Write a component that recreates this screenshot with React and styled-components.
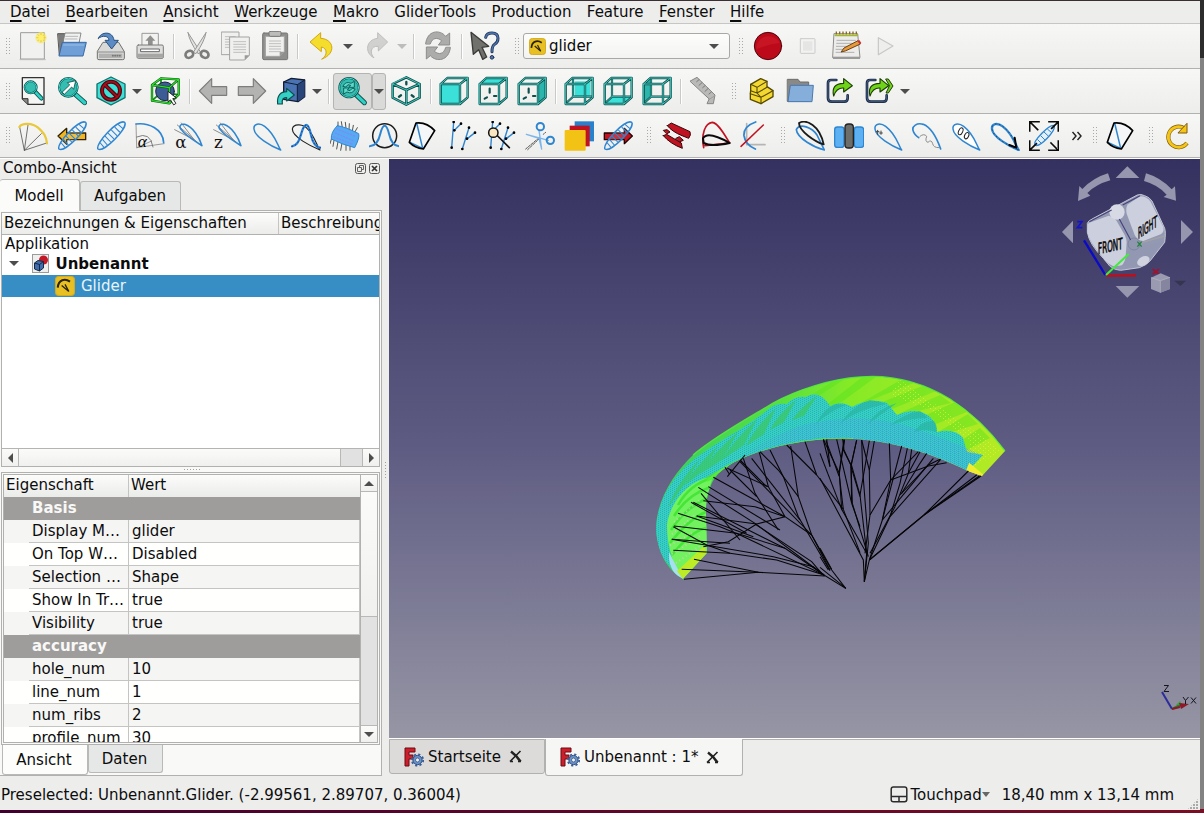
import React from "react";
import styled, { createGlobalStyle, css } from "styled-components";

const Global = createGlobalStyle`
  *{box-sizing:border-box}
  body{margin:0;background:#808080;font:15px/18px "DejaVu Sans",sans-serif;color:#0c0c0c;overflow:hidden}
  svg{display:block;flex:none}
`;

const Screen = styled.div`display:flex;width:1204px;height:813px;overflow:hidden;`;
const Desktop = styled.div`width:4px;background:linear-gradient(#2c2c2c 0 58px,#828282 58px 809px,#7b0d24 809px);`;
const Window = styled.div`
  width:1200px;height:813px;display:flex;flex-direction:column;background:#ededec;border-top:1px solid #3a2d33;
`;
const MenuBar = styled.nav`height:23px;flex:none;display:flex;gap:15.45px;padding:2px 10px 0;border-bottom:1px solid #c6c6c5;white-space:nowrap;`;
const Mnemonic = styled.span`text-decoration:underline;text-decoration-thickness:2px;text-underline-offset:3px;text-decoration-skip-ink:none;`;
const ToolBar = styled.div`
  height:${p => p.$h || 45}px;flex:none;display:flex;align-items:center;padding-left:4px;
  background:linear-gradient(#f7f7f6,#ededec);border-bottom:1px solid #b1b1b0;
`;
const Tool = styled.div`
  width:${p => p.$w || 39}px;flex:none;display:flex;justify-content:center;align-items:center;
  opacity:${p => p.$dim ? 0.45 : 1};
  ${p => p.$pressed && css`height:37px;background:#dadad9;border:1px solid #b4b4b3;border-radius:3px;`}
`;
const SepBox = styled.div`width:${p => p.$w || 8}px;flex:none;display:flex;justify-content:center;&::after{content:"";width:1px;height:25px;background:#c9c9c8;box-shadow:1px 0 #fff;}`;
const Gap = styled.div`width:${p => p.$w}px;flex:none;`;
const Handle = styled.div`
  width:${p => p.$w}px;flex:none;display:flex;justify-content:center;
  &::after{content:"";width:5px;height:17px;background:radial-gradient(circle at .5px .5px,#a9a9a8 .6px,transparent .8px) 0 0/3px 3px;}
`;
const Tri = styled.div`
  width:0;height:0;border:5px solid transparent;border-top-color:${p => p.$c || "#4d4d4d"};border-bottom:0;
  ${p => p.$small && css`border-left-width:4.5px;border-right-width:4.5px;`}
  ${p => p.$dir === "up" && css`border:5px solid transparent;border-bottom-color:#4d4d4d;border-top:0;`}
  ${p => p.$dir === "left" && css`border:5px solid transparent;border-right-color:#4d4d4d;border-left:0;`}
  ${p => p.$dir === "right" && css`border:5px solid transparent;border-left-color:#4d4d4d;border-right:0;`}
`;
const Combo = styled.div`
  width:207px;height:26px;display:flex;align-items:center;gap:3px;padding:0 10px 0 5px;border:1px solid #a8a8a7;border-radius:3px;
  background:linear-gradient(#fdfdfc,#f3f3f2);
`;
const Grow = styled.span`flex:1;`;

const Body = styled.div`height:618px;flex:none;display:flex;border-top:1px solid #fff;`;
const Dock = styled.aside`width:382px;display:flex;flex-direction:column;`;
const Splitter = styled.div`
  width:7px;display:flex;justify-content:center;padding-top:303px;
  &::after{content:"";width:1px;height:17px;background:repeating-linear-gradient(#a0a0a0 0 1px,transparent 1px 3px);}
`;
const DockTitle = styled.div`height:20px;flex:none;display:flex;align-items:flex-start;padding:0 2px 0 3px;gap:3px;`;
const DockButtons = styled.div`display:flex;gap:3px;padding-top:4px;`;
const TabRow = styled.div`height:31px;flex:none;display:flex;align-items:flex-end;`;
const Tab = styled.div`
  width:${p => p.$w}px;height:${p => p.$on ? 31 : 29}px;display:flex;align-items:center;justify-content:center;white-space:nowrap;
  border:1px solid #b9b9b8;border-bottom:0;border-radius:3px 3px 0 0;padding-right:1px;
  background:${p => p.$on ? "#fbfbfa" : "#e6e8e7"};
  ${p => p.$on && css`border-left:0;height:32px;margin-bottom:-1px;position:relative;`}
`;
const Pane = styled.div`
  flex:1;min-height:0;border:1px solid #b1b1b0;border-left:0;display:flex;flex-direction:column;padding:1px 1px 0;background:#f9f9f7;
`;
const Tree = styled.div`width:379px;height:255px;flex:none;background:#fff;border:1px solid #b1b1b0;display:flex;flex-direction:column;`;
const TreeHead = styled.div`height:22px;display:flex;background:linear-gradient(#fcfcfb,#ececeb);border-bottom:1px solid #b1b1b0;overflow:hidden;white-space:nowrap;`;
const HeadCell = styled.div`
  width:${p => p.$w}px;flex:none;padding:1px 0 0 2px;overflow:hidden;
  border-right:${p => p.$last ? 0 : "1px solid #c4c4c3"};
`;
const TreeRow = styled.div`
  height:${p => p.$h || 22}px;display:flex;align-items:center;gap:${p => p.$gap || 0}px;padding:0 0 1px ${p => p.$indent}px;
  font-weight:${p => p.$bold ? 700 : 400};
  background:${p => p.$sel ? "#368ec4" : "transparent"};color:${p => p.$sel ? "#e9f3fa" : "inherit"};
`;
const HScroll = styled.div`height:18px;margin-top:auto;display:flex;border-top:1px solid #b4b4b3;background:#e1e2e1;`;
const ScrollPart = styled.div`
  width:${p => p.$w}px;${p => p.$hh && css`height:${p.$hh}px;`}
  display:flex;align-items:center;justify-content:center;
  background:${p => p.$groove ? "#e0e1e0" : "linear-gradient(#fbfbfa,#f0f0ef)"};
  ${p => p.$v ? css`border-bottom:1px solid #b8b8b7;` : css`border-right:1px solid #b8b8b7;`}
  ${p => p.$end && css`border:0;border-top:${p.$v ? "1px solid #b8b8b7" : "0"};`}
`;
const DotLine = styled.div`width:17px;height:1px;flex:none;margin:2px 0 2px 183px;background:repeating-linear-gradient(90deg,#a0a0a0 0 1px,transparent 1px 3px);`;
const PropFrame = styled.div`width:379px;height:273px;flex:none;border:1px solid #b1b1b0;padding:1px;`;
const PropView = styled.div`height:100%;display:flex;border:1px solid #b1b1b0;background:#fff;`;
const PropTable = styled.div`width:357px;overflow:hidden;height:267px;`;
const PropHead = styled.div`height:22px;display:flex;background:linear-gradient(#fcfcfb,#eaecea);`;
const Group = styled.div`height:23px;background:#9f9d9b;color:#f8f8f7;font-weight:700;padding:2px 0 0 28px;`;
const PropRow = styled.div`
  height:23px;display:flex;padding-left:25px;background:${p => p.$alt ? "#f5f5f4" : "#fffffe"};
  white-space:nowrap;
`;
const Cell = styled.div`
  width:${p => p.$w}px;padding:2px 0 0 3px;border-right:1px solid #c4c4c3;border-bottom:1px solid #c4c4c3;overflow:hidden;
`;
const VScroll = styled.div`width:17px;display:flex;flex-direction:column;border-left:1px solid #b1b1b0;background:#e1e2e1;`;
const BottomTabs = styled.div`height:30px;flex:none;display:flex;align-items:flex-start;padding-left:1px;`;
const BottomTab = styled.div`
  width:${p => p.$w}px;height:${p => p.$on ? 30 : 28}px;display:flex;align-items:center;justify-content:center;
  border:1px solid #b9b9b8;border-top:0;border-radius:0 0 3px 3px;padding-right:2px;background:${p => p.$on ? "#fdfdfc" : "#e6e8e7"};
`;

const Main = styled.main`width:811px;display:flex;flex-direction:column;`;
const Viewport = styled.div`height:579px;background:linear-gradient(#343160,#5f5c83 50%,#9696a5);`;
const DocTabs = styled.div`height:38px;display:flex;align-items:flex-start;border-top:1px solid #fff;`;
const DocTab = styled.div`
  width:${p => p.$w}px;height:${p => p.$on ? 37 : 35}px;display:flex;align-items:center;padding-left:14px;white-space:nowrap;
  border:1px solid #b1b1b0;border-top:${p => p.$on ? "0" : "1px solid #b1b1b0"};border-radius:0 0 3px 3px;
  background:${p => p.$on ? "#f6f6f5" : "#dcdbda"};
`;
const DocRest = styled.div`flex:1;border-top:1px solid #b1b1b0;`;
const DocName = styled.span`margin:0 8px 0 4px;`;
const Status = styled.footer`height:33px;flex:none;display:flex;align-items:center;padding:4px 0 0 1px;white-space:nowrap;`;
const Touch = styled.div`display:flex;align-items:center;margin-right:12px;`;
const Grip = styled.div`width:12px;height:12px;margin:18px 1px 0 13px;align-self:flex-start;background:radial-gradient(circle at 1px 1px,#aaa .8px,transparent 1px) 0 0/3px 3px;clip-path:polygon(100% 0,100% 100%,0 100%);`;
const Taskbar = styled.div`height:3px;flex:none;margin-top:1px;background:linear-gradient(90deg,#42002e,#7b0d24);`;

/* ---------- icons ---------- */
const Ic = ({ s = 30, children }) => (
  <svg width={s} height={s} viewBox="0 0 90 90" fill="none" strokeLinecap="round" strokeLinejoin="round">{children}</svg>
);
const B = "#2f86d0";
const TEAL = "#3be0d8";
const DT = "#0d4f4b";
const WING = "M6 84C-4 68 68 -8 86 4C98 20 22 96 6 84Z";
const Ribs = () => <path d="M13 66L24 79M20 56L34 72M28 46L44 63M37 37L53 53M47 28L62 43M57 19L71 33M67 11L80 22" stroke={B} strokeWidth="3.2" />;
const Wing = ({ o = .55 }) => <><path d={WING} fill="#e4f0fa" fillOpacity={o} stroke={B} strokeWidth="4.5" /><Ribs /></>;
const Foil = ({ c = B, w = 4.5, f = "none" }) => <path d="M86 87C76 74 72 42 38 16C22 4 4 8 6 24C8 48 58 76 86 87Z" stroke={c} strokeWidth={w} fill={f} />;

const Page = ({ x, y, w, h, lines }) => (
  <><path d={`M${x} ${y}h${w}v${h - 14}l-14 14h${14 - w}z`} fill="#f0f0ef" stroke="#a3a3a2" strokeWidth="3" />
    <path d={`M${x + w} ${y + h - 14}h-14v14z`} fill="#999" />
    {lines && [14, 22, 30, 38, 46].map(d => <path key={d} d={`M${x + 11} ${y + d}h${w - 22}`} stroke="#b5b5b4" strokeWidth="2.5" />)}</>
);
const Cube = ({ face }) => {
  const k = { front: "M5 23H63V84H5Z", top: "M5 23L25 5H86L63 23Z", right: "M63 23L86 5V64L63 84Z", rear: "M32 16H80V60H32Z", bottom: "M8 82L26 62H84L63 82Z", left: "M6 23L26 8V62L6 82Z" }[face];
  const open = ["rear", "bottom", "left"].includes(face);
  const edges = "M5 24H63V84H5ZM5 24L25 6H86L63 24M86 6V64L63 84";
  return <Ic>
    <path d={k} fill={face === "left" || face === "right" ? "#2cb5ac" : TEAL} />
    {open
      ? <><path d="M27 8V62H84M27 62L6 82" stroke={DT} strokeWidth="6.5" /><path d="M27 8V62H84M27 62L6 82" stroke="#45cdc4" strokeWidth="2.5" /></>
      : face !== "front" && <path d="M35 38V50M20 68L27 64M48 60H55" stroke={DT} strokeWidth="6.5" />}
    <path d={edges} stroke={DT} strokeWidth="7" />
    <path d={edges} stroke="#48d2c9" strokeWidth="2.8" />
  </Ic>;
};
const Lens = ({ cx, cy, r, ex, ey, w = 11, children }) => (
  <><path d={`M${cx + r * .75} ${cy + r * .75}L${ex} ${ey}`} stroke={DT} strokeWidth={w + 4} />
    <path d={`M${cx + r * .75} ${cy + r * .75}L${ex} ${ey}`} stroke="#2fd0c6" strokeWidth={w - 1} />
    <circle cx={cx} cy={cy} r={r} fill="#34bdb0" stroke={DT} strokeWidth="6" />
    <circle cx={cx} cy={cy} r={r - .5} stroke="#3fd9cf" strokeWidth="3" />{children}</>
);
const Cursor = ({ x, y, k = 1, c = "#fff", s = "#222" }) => (
  <path transform={`translate(${x} ${y}) scale(${k})`} d="M0 0L0 32L8 26L18 42L25 37L15 22L25 20Z" fill={c} stroke={s} strokeWidth="3" />
);
const GreenArrow = ({ x = 0 }) => <path transform={`translate(${x} 0)`} d="M26 60C20 36 30 22 56 22V8L82 29L56 48V36C42 35 32 42 26 60Z" fill="#6fd319" stroke="#1c3e05" strokeWidth="3.5" />;
const Bracket = () => <><path d="M34 12H18Q9 12 9 21V66Q9 77 20 77H58Q68 77 68 66V58" stroke="#1c2b45" strokeWidth="8" /><path d="M34 12H18Q9 12 9 21V66Q9 77 20 77H58Q68 77 68 66V58" stroke="#5172a3" strokeWidth="2" /></>;
const Panel = () => <Ic><path d="M24 6Q56 0 80 29L46 84Q20 80 4 64Z" fill="#f4f6f8" /><path d="M26 6L44 82M6 64L44 82" stroke={B} strokeWidth="4.5" /><path d="M24 6Q56 2 80 29L46 84Q20 80 4 64Z" stroke="#000" strokeWidth="5" /></Ic>;
const Lines = () => <><path d="M14 80L20 3M22 28L42 8M46 84L66 20M58 55L84 35" stroke={B} strokeWidth="4.2" />
  {[[14, 80], [20, 3], [22, 28], [42, 8], [46, 84], [66, 20], [84, 35], [60, 53]].map(([x, y], i) => <circle key={i} cx={x} cy={y} r="4" fill="#000" />)}</>;

const I = {
  New: () => <Ic><rect x="9" y="5" width="70" height="79" fill="#f1f1f0" stroke="#9c9c9b" strokeWidth="3" /><path d="M6 86H82" stroke="#bbb" strokeWidth="3" /><circle cx="69" cy="20" r="17" fill="#f7e96b" opacity=".75" /><path d="M69 7v26M56 20h26M60 11l18 18M78 11l-18 18" stroke="#eccb20" strokeWidth="3" /><circle cx="69" cy="20" r="8" fill="#fff06a" /></Ic>,
  Open: () => <Ic><path d="M3 8H34V16H66V72H8Z" fill="#7c7c7b" stroke="#565656" strokeWidth="3" /><path d="M18 36L24 6H72L66 36Z" fill="#f1f1f1" stroke="#777" strokeWidth="2.5" /><path d="M26 16H62M25 24H60" stroke="#aaa" strokeWidth="2.5" /><path d="M17 34H88L78 75H7Z" fill="#6f9fd6" stroke="#3768a5" strokeWidth="3" /><path d="M20 42H80" stroke="#9cc0e8" strokeWidth="3" /></Ic>,
  Save: () => <Ic><path d="M22 34H68L85 62V82Q85 86 80 86H9Q4 86 4 82V62Z" fill="#d9d9d8" stroke="#6f6f6e" strokeWidth="3" /><path d="M5 63H85" stroke="#8a8a89" strokeWidth="3" /><rect x="9" y="68" width="70" height="13" fill="#b1b1b0" /><path d="M50 74h24" stroke="#777" strokeWidth="5" strokeDasharray="1 6" /><path d="M7 22C14 2 50 -2 54 28H67L47 54L27 28H39C38 14 20 12 7 22Z" fill="#5b8ac4" stroke="#2b527f" strokeWidth="3" /></Ic>,
  Print: () => <Ic><rect x="22" y="7" width="48" height="42" fill="#f2f2f1" stroke="#999" strokeWidth="3" /><path d="M46 13L61 29H53V42H39V29H31Z" fill="#8f8f8e" /><rect x="6" y="42" width="79" height="40" rx="4" fill="#dededd" stroke="#7b7b7a" strokeWidth="3" /><path d="M18 54H73V62H18Z" fill="#fff" stroke="#666" strokeWidth="3" /><path d="M6 68H85V80H6Z" fill="#a6a6a5" /></Ic>,
  Cut: () => <Ic><path d="M18 5L56 64L48 68Q22 30 18 5Z" fill="#e3e3e2" stroke="#989897" strokeWidth="3" /><path d="M72 5L34 64L42 68Q68 30 72 5Z" fill="#e3e3e2" stroke="#989897" strokeWidth="3" /><ellipse cx="22" cy="70" rx="12" ry="10" transform="rotate(-30 22 70)" stroke="#7c7c7b" strokeWidth="8" /><ellipse cx="68" cy="70" rx="12" ry="10" transform="rotate(30 68 70)" stroke="#7c7c7b" strokeWidth="8" /></Ic>,
  Copy: () => <Ic><Page x={2} y={3} w={52} h={68} lines /><Page x={27} y={18} w={58} h={69} lines /></Ic>,
  Paste: () => <Ic><rect x="8" y="6" width="75" height="80" rx="4" fill="#8f8f8e" stroke="#767675" strokeWidth="3" /><Page x={17} y={16} w={56} h={60} lines /><rect x="27" y="1" width="36" height="15" rx="4" fill="#bcbcbb" stroke="#777" strokeWidth="3" /></Ic>,
  Undo: () => <Ic><path d="M48 84C66 74 64 50 46 48V62L12 33L44 5V22C84 24 92 68 48 84Z" fill="#f4dd2c" stroke="#d0a712" strokeWidth="3" /></Ic>,
  Redo: () => <Ic><path d="M38 80C10 66 14 26 50 22V5L80 33L52 60V46C28 44 26 66 38 80Z" fill="#a9a9a8" stroke="#7d7d7c" strokeWidth="3" /></Ic>,
  Refresh: () => <Ic><path d="M8 38C12 -2 50 -6 68 16L80 6V42H46L56 29C42 18 28 20 22 38Z" fill="#acacab" stroke="#8d8d8c" strokeWidth="3" /><path d="M82 50C78 90 40 94 22 74L10 84V48H44L34 61C48 72 62 70 68 50Z" fill="#acacab" stroke="#8d8d8c" strokeWidth="3" /></Ic>,
  Whats: () => <Ic><path d="M3 4L56 46L36 49L50 78L38 85L26 56L10 70Z" fill="#70716d" stroke="#3a3b38" strokeWidth="4" /><path d="M47 19Q50 6 66 6Q84 6 84 22Q84 34 74 40Q66 45 66 62" stroke="#24395c" strokeWidth="9" /><path d="M47 19Q50 6 66 6Q84 6 84 22Q84 34 74 40Q66 45 66 62" stroke="#4e76ae" strokeWidth="4" /><circle cx="66" cy="79" r="5.5" fill="#4e76ae" stroke="#24395c" strokeWidth="3" /></Ic>,
  Record: () => <Ic><circle cx="45" cy="45" r="41" fill="#bd0a1b" stroke="#4c070d" strokeWidth="3" /><path d="M10 55A37 37 0 0 1 80 36Q40 40 10 55Z" fill="#cf1c2b" opacity=".6" /></Ic>,
  Stop: () => <Ic><rect x="22" y="23" width="44" height="44" rx="2" fill="#f2f2f1" stroke="#cbcbca" strokeWidth="3" /><rect x="30" y="31" width="28" height="28" fill="#e5e5e4" /></Ic>,
  Play: () => <Ic><path d="M22 20L66 45L22 71Z" fill="#eeeeed" stroke="#c7c7c6" strokeWidth="3.5" /></Ic>,
  Note: () => <Ic><path d="M7 8H77L84 80H3Z" fill="#ececeb" stroke="#8c8c8b" strokeWidth="3" /><path d="M3 77H84V84H3Z" fill="#9a9a99" /><path d="M11 6h64" stroke="#8a6a23" strokeWidth="9" strokeDasharray="4 6" strokeLinecap="butt" /><path d="M10 13h66" stroke="#a5b52b" strokeWidth="5" /><path d="M15 28H70M14 37H60M13 46H50M12 55H35M12 64H66" stroke="#b0b0af" strokeWidth="3" /><path d="M28 62L36 51L78 29L85 39L42 59Z" fill="#e79b3b" stroke="#6c4115" strokeWidth="3" /><path d="M76 30L82 27L88 36L84 40Z" fill="#c33" /></Ic>,
  FitAll: () => <Ic><path d="M13 5H78V85H30L13 68Z" fill="#f5f5f4" stroke="#333" strokeWidth="4" /><path d="M13 68H30V85" fill="#888" stroke="#333" strokeWidth="3" /><Lens cx={38} cy={34} r={18} ex={70} ey={67} w={9} /></Ic>,
  FitSel: () => <Ic><Lens cx={34} cy={34} r={28} ex={83} ey={80}><path d="M16 48L38 27L31 20L56 14L50 40L44 33L23 54Z" fill="#fff" stroke={DT} strokeWidth="2.5" /></Lens></Ic>,
  Style: () => <Ic><path d="M45 3L87 24V65L45 87L3 65V24Z" fill={TEAL} stroke="#14706b" strokeWidth="4" /><circle cx="45" cy="44" r="27" stroke="#56060e" strokeWidth="12" /><path d="M26 26L64 63" stroke="#56060e" strokeWidth="12" /><circle cx="45" cy="44" r="27" stroke="#a3101d" strokeWidth="5" /><path d="M26 26L64 63" stroke="#a3101d" strokeWidth="5" /></Ic>,
  BoxSel: () => <Ic><path d="M33 7V50L6 74M33 50L84 56" stroke="#0d8a12" strokeWidth="5" /><circle cx="45" cy="46" r="28" fill="#3b5c94" stroke="#15243f" strokeWidth="3" /><path d="M6 27L58 35V82L6 74ZM6 27L33 7L86 10L58 35M86 10V56L58 82" stroke="#0a5a0e" strokeWidth="7" /><path d="M6 27L58 35V82L6 74ZM6 27L33 7L86 10L58 35M86 10V56L58 82" stroke="#2fe02f" strokeWidth="3.5" /><Cursor x={54} y={47} k={.95} /></Ic>,
  Left: () => <Ic><path d="M4 45L41 8V32H86V58H41V82Z" fill="#b3b3b2" stroke="#7d7d7c" strokeWidth="3.5" /></Ic>,
  Right: () => <Ic><path d="M86 45L49 8V32H4V58H49V82Z" fill="#b3b3b2" stroke="#7d7d7c" strokeWidth="3.5" /></Ic>,
  Link: () => <Ic><path d="M23 18L46 7L86 12V62L66 77L23 70Z" fill="#4a73b4" stroke="#121d33" strokeWidth="4" /><path d="M64 26L86 12V62L64 77Z" fill="#28457a" /><path d="M23 18L64 26L86 12M64 26V77" stroke="#121d33" strokeWidth="3" /><path d="M5 84C2 58 14 47 32 47V37L55 57L32 75V65C22 64 17 70 19 84Z" fill="#35cfc6" stroke={DT} strokeWidth="3.5" /></Ic>,
  Zoom: () => <Ic><Lens cx={36} cy={35} r={29} ex={82} ey={80}><path d="M18 30Q26 14 42 22L52 16V34H36L41 28Q32 22 27 32ZM54 40Q46 56 30 48L20 54V36H36L31 42Q40 48 45 38Z" fill="#5cd9cd" stroke={DT} strokeWidth="2.5" /></Lens></Ic>,
  Iso: () => <Ic><path d="M46 4L86 24V65L46 86L5 65V24ZM5 24L46 42L86 24M46 42V86" stroke={DT} strokeWidth="7.5" /><path d="M46 4L86 24V65L46 86L5 65V24ZM5 24L46 42L86 24M46 42V86" stroke="#45cdc4" strokeWidth="2.8" /><path d="M46 18V25M24 62L30 58M62 58L68 62" stroke={DT} strokeWidth="7" /></Ic>,
  Ruler: () => <Ic><path d="M7 15L27 4L81 57L76 83L57 83L63 70Z" fill="#b9b9b8" stroke="#868685" strokeWidth="3" /><path d="M33 11l-7 6M42 20l-9 8M51 29l-7 6M60 38l-9 8M70 48l-7 6" stroke="#7b7b7a" strokeWidth="3" /><path d="M63 70L80 60" stroke="#959594" strokeWidth="2.5" /></Ic>,
  Bricks: () => <Ic><path d="M11 44L11 25L41 8L60 16V32L78 44V62L42 83L10 70V53Z" fill="#f3d832" stroke="#574900" strokeWidth="4" /><path d="M11 25L30 34L60 16M30 34V51M11 44L30 51L60 34M30 51L42 64V83M10 53L42 64L78 44" stroke="#574900" strokeWidth="3.2" /></Ic>,
  Folder: () => <Ic><path d="M5 10H36L42 18H68V76H5Z" fill="#898988" stroke="#6c6c6b" strokeWidth="3" /><path d="M14 28H82L78 77H7Z" fill="#85aedb" stroke="#4a78b0" strokeWidth="3" /></Ic>,
  Share: () => <Ic><Bracket /><GreenArrow /></Ic>,
  Share2: () => <Ic><Bracket /><GreenArrow x={-8} /><path d="M66 9H73L87 30L73 51H66L76 30Z" fill="#6fd319" stroke="#1c3e05" strokeWidth="3" /></Ic>,
  Fan: () => <Ic><path d="M5 18L19 88L30 12M19 88L70 38M19 88L86 66" stroke="#555" strokeWidth="2.5" /><path d="M4 18C12 4 44 6 60 20C78 36 84 44 87 67" stroke="#e9c83c" strokeWidth="6.5" /></Ic>,
  WingLeft: () => <Ic><path d="M3 45L29 22V36H86V56H29V70Z" fill="#f2b520" stroke="#2e2200" strokeWidth="4" /><Wing o={.15} /></Ic>,
  Wing: () => <Ic><Wing /></Ic>,
  Arc: () => <Ic><path d="M3 9L5 80L87 68M5 80L50 60" stroke="#888" strokeWidth="2.5" /><path d="M5 48Q46 30 54 78" stroke="#666" strokeWidth="2.5" /><path d="M3 9C40 4 84 24 86 65" stroke={B} strokeWidth="5" /><text x="8" y="77" fontSize="52" fontStyle="italic" fontFamily="Liberation Serif, serif" fill="#000">α</text></Ic>,
  Alpha: () => <Ic><path d="M10 12L82 74M2 26L60 56L22 6" stroke="#777" strokeWidth="2.5" /><path d="M84 74C76 50 58 18 32 10C18 7 14 17 22 26C34 44 62 60 84 74Z" stroke={B} strokeWidth="4.5" /><text x="4" y="81" fontSize="50" fontFamily="DejaVu Serif, serif" fill="#111">α</text></Ic>,
  Zed: () => <Ic><path d="M10 12L82 74M2 26L60 56L22 6" stroke="#777" strokeWidth="2.5" /><path d="M84 74C76 50 58 18 32 10C18 7 14 17 22 26C34 44 62 60 84 74Z" stroke={B} strokeWidth="4.5" /><text x="3" y="81" fontSize="50" fontFamily="DejaVu Serif, serif" fill="#111">z</text></Ic>,
  Foil: () => <Ic><Foil /></Ic>,
  Ballon: () => <Ic><path d="M87 87C60 76 4 48 4 24C8 4 40 12 48 22C70 42 76 72 87 87Z" stroke="#222" strokeWidth="3.5" /><path d="M3 76Q22 74 30 40Q38 12 46 12Q54 12 60 42Q68 78 88 80" stroke={B} strokeWidth="7" /><path d="M3 76Q22 74 30 40Q38 12 46 12Q54 12 60 42Q68 78 88 80" stroke="#0a2fb0" strokeWidth="3" strokeDasharray="2 9" /></Ic>,
  Rib: () => <Ic><path d="M24 3V20M34 2L37 20M46 4L48 22M58 8L57 26M70 13L67 30M82 20L74 34M4 55L0 68M12 58L9 76M24 62L20 84M36 66L32 88M48 70V88M60 74V88" stroke="#333" strokeWidth="2.5" /><path d="M22 14Q48 18 86 38Q90 50 74 80Q40 72 4 54Q2 34 22 14Z" fill="#56a9f2" stroke="#2f86d0" strokeWidth="3" /><path d="M20 24L76 46M16 36L72 60M12 48L68 70" stroke="#7c8bf5" strokeWidth="4" strokeDasharray="3 6" /></Ic>,
  Bell: () => <Ic><circle cx="47" cy="44" r="36" stroke="#1c1c1c" strokeWidth="4.5" /><path d="M2 76Q26 74 34 38Q40 14 47 14Q54 14 60 38Q68 74 90 76" stroke={B} strokeWidth="6" /></Ic>,
  Panel,
  Lines: () => <Ic><Lines /></Ic>,
  LinesTool: () => <Ic><Lines /><path d="M32 42L70 80" stroke="#111" strokeWidth="5" /><circle cx="22" cy="35" r="14" fill="#f8e6c0" stroke="#111" strokeWidth="4.5" /></Ic>,
  Scissors: () => <Ic><path d="M2 84L62 34M8 86L44 52" stroke="#555" strokeWidth="3" strokeDasharray="7 4" /><path d="M42 28L50 84L42 52L4 40L70 58" fill="#e8f2fc" stroke="#7db6ea" strokeWidth="4" /><circle cx="46" cy="17" r="11" stroke={B} strokeWidth="6" /><circle cx="76" cy="58" r="11" stroke={B} strokeWidth="6" /></Ic>,
  Layers: () => <Ic><rect x="32" y="1" width="58" height="60" fill="#2980cb" /><rect x="17" y="14" width="60" height="62" fill="#c01322" /><rect x="2" y="27" width="63" height="62" rx="3" fill="#f2c315" /></Ic>,
  WingRight: () => <Ic><path d="M88 45L64 22V36H4V56H64V68Z" fill="#c5121f" stroke="#200" strokeWidth="4" /><Wing o={.15} /></Ic>,
  Red: () => <Ic><path d="M16 14L28 6L84 32Q88 42 80 52L60 44Q30 32 16 14ZM5 28L15 26L24 33L15 38ZM4 44L14 40L58 66L61 82Q24 68 4 44ZM42 52L52 47L64 58L54 62Z" fill="#c01322" stroke="#3a0508" strokeWidth="3" /></Ic>,
  Sketch: () => <Ic><path d="M8 80C0 40 12 6 34 4C52 6 70 40 86 66L12 74" stroke="#c01322" strokeWidth="5" /><path d="M6 52C14 38 40 40 86 66Q30 78 8 66Z" stroke="#0a0a0a" strokeWidth="6" /></Ic>,
  Cross: () => <Ic><path d="M20 8V71H75" stroke="#b5b5b4" strokeWidth="5" /><path d="M47 3Q10 16 12 44Q16 72 46 84" stroke={B} strokeWidth="5.5" /><path d="M3 76L70 12" stroke="#c01322" strokeWidth="4.5" /></Ic>,
  Foil2: () => <Ic><path d="M88 87C60 80 6 52 4 26C14 4 52 20 66 42Z" stroke={B} strokeWidth="5" /><path d="M86 70C60 62 12 30 12 6C34 -6 74 12 86 70Z" stroke="#1a1a1a" strokeWidth="5.5" /></Ic>,
  Pack: () => <Ic><rect x="2" y="18" width="28" height="61" rx="8" fill="#5db0f2" stroke={B} strokeWidth="4" /><rect x="61" y="18" width="28" height="61" rx="8" fill="#5db0f2" stroke={B} strokeWidth="4" /><rect x="33" y="9" width="25" height="72" rx="10" fill="#6d6d6c" stroke="#222" strokeWidth="4" /></Ic>,
  FoilMark: () => <Ic><Foil /><path d="M10 32H18M14 28V40M20 36h8M24 30v10" stroke="#444" strokeWidth="3" /></Ic>,
  FoilOpen: () => <Ic><path d="M86 84C74 50 58 20 34 10C14 4 0 16 3 28Q6 40 20 50" stroke={B} strokeWidth="5" /><path d="M24 46Q36 36 44 46Q38 62 48 64Q58 54 62 68Q64 80 80 80" stroke="#8b8b8a" strokeWidth="3" /></Ic>,
  FoilHoles: () => <Ic><Foil f="#fff" /><ellipse cx="29" cy="31" rx="6" ry="11" transform="rotate(25 29 31)" stroke="#222" strokeWidth="3" /><ellipse cx="47" cy="44" rx="6" ry="10" transform="rotate(25 47 44)" stroke="#222" strokeWidth="3" /></Ic>,
  FoilTail: () => <Ic><Foil w={7} /><path d="M74 50L79 80L58 72" stroke="#000" strokeWidth="6" /><path d="M86 87C76 74 72 42 38 16C22 4 4 8 6 24C8 48 58 76 86 87Z" stroke="#06224f" strokeWidth="2" strokeDasharray="2 10" /></Ic>,
  Expand: () => <Ic><path d="M18 72C10 62 62 8 76 14C80 30 32 82 18 72Z" fill="#e4f0fa" stroke={B} strokeWidth="4" /><path d="M26 56L36 66M36 45L47 56M46 34L58 45M56 25L67 34" stroke={B} strokeWidth="3" /><path d="M2 30V2H30M4 4L26 26M60 2H88V30M86 4L68 22M88 60V88H60M86 86L66 66M30 88H2V60M4 86L22 68" stroke="#0a0a0a" strokeWidth="5" strokeLinecap="square" /></Ic>,
  Reload: () => <Ic><path d="M72 66A31 31 0 1 1 64 22" stroke="#7c5a06" strokeWidth="12" strokeLinecap="butt" /><path d="M72 66A31 31 0 1 1 64 22" stroke="#f6c415" strokeWidth="8.5" strokeLinecap="butt" /><path d="M72 8V36H46Z" fill="#f6c415" stroke="#7c5a06" strokeWidth="3" /></Ic>,
  More: () => <svg width="12" height="12" viewBox="0 0 12 12" fill="none" stroke="#222" strokeWidth="1.4"><path d="M1.5 2L5 6L1.5 10M6.5 2L10 6L6.5 10" /></svg>,
};

const GliderIcon = ({ s = 18 }) => <svg width={s} height={s} viewBox="0 0 18 18" fill="none"><rect x=".5" y=".5" width="17" height="17" rx="3" fill="#e8c024" stroke="#d3ab1c" /><path d="M2.5 10.5C3 3 9 2 13.5 5" stroke="#292307" strokeWidth="1.8" /><path d="M6 8.5L12.5 14M9 7.5L12.5 14" stroke="#292307" strokeWidth="1.2" /></svg>;
const DocIcon = () => <svg width="17" height="19" viewBox="0 0 17 19"><rect x=".5" y=".5" width="16" height="18" fill="#efefee" stroke="#9b9b9a" /><circle cx="11.5" cy="6" r="4.5" fill="#c31a26" /><path d="M2.5 9L6 6.5L11.5 7.5V14L7.5 17L2.5 15Z" fill="#3f6eae" stroke="#172844" /><path d="M2.5 9L7.5 10.5L11.5 7.5M7.5 10.5V17" stroke="#172844" fill="none" /></svg>;
const FIcon = () => <svg width="20" height="20" viewBox="0 0 20 20"><path d="M1 1H11V5H5V8H9V12H5V19H1Z" fill="#cc1f2b" stroke="#6c0a12" /><circle cx="13.5" cy="13" r="4.6" fill="#6b93cb" stroke="#2a4878" /><circle cx="13.5" cy="13" r="5.7" fill="none" stroke="#3a5f98" strokeWidth="1.8" strokeDasharray="2.2 2.28" /><circle cx="13.5" cy="13" r="2" fill="#f1f1f1" stroke="#2a4878" strokeWidth=".7" /></svg>;
const CloseX = () => <svg width="13" height="13" viewBox="0 0 13 13" fill="none" stroke="#222" strokeWidth="2"><path d="M2 1.5Q7 5 11.5 11.5" strokeWidth="2.6" /><path d="M11.5 1L1 11.5M1 11.5h3M9 11.5h3" strokeWidth="1.6" /></svg>;
const FloatBtn = ({ close }) => <svg width="11" height="11" viewBox="0 0 11 11" fill="none" stroke="#555"><rect x=".5" y=".5" width="10" height="10" rx="2" />{close ? <path d="M3 3L8 8M8 3L3 8" strokeWidth="1.7" stroke="#333" /> : <path d="M4.5 4V2.5H8.5V6.5H7M2.5 4.5H6.5V8.5H2.5Z" strokeWidth=".9" />}</svg>;
const PadIcon = () => <svg width="18" height="17" viewBox="0 0 18 17" fill="none" stroke="#2b2b2b" strokeWidth="1.5"><rect x="1.2" y="1" width="15.6" height="14.8" rx="2.2" /><path d="M1 10.5H17M9 10.5V16" /></svg>;

/* ---------- toolbars ---------- */
const row1 = ["New", "Open", "Save", "Print", "|8", "Cut", "Copy", "Paste", "|7", "Undo", "v16", "Redo:40:d", "x12", "|11", "Refresh:38", "|8", "Whats", "_8", "#11", "combo", "_4", "#15", "Record:38", "Stop:41", "Note:38", "Play"];
const row2 = ["FitAll", "FitSel", "Style", "v14", "BoxSel:41", "|8", "Left", "Right", "Link", "v14", "|9", "Zoom:38.5:p", "w14.5", "Iso:40.5", "|7.5", "cfront", "ctop", "cright", "|8", "crear", "cbottom", "cleft", "|8", "Ruler:37", "_6", "#15", "Bricks", "Folder", "Share", "Share2", "v14"];
const row3 = ["Fan", "WingLeft", "Wing", "Arc", "Alpha", "Zed", "Foil", "Ballon", "Rib", "Bell", "Panel", "Lines", "LinesTool", "Scissors", "Layers", "WingRight", "_5", "#15", "Red", "Sketch", "Cross", "_3", "#13", "Foil2", "Pack", "FoilMark", "FoilOpen", "FoilHoles", "FoilTail", "Expand", "More:27", "#11", "Panel", "_5", "#13", "Reload"];

function Item({ d }) {
  const n = parseFloat(d.slice(1));
  if (d === "combo") return <Combo><GliderIcon s={17} /><Grow>glider</Grow><Tri /></Combo>;
  if (d[0] === "|") return <SepBox $w={n} />;
  if (d[0] === "_") return <Gap $w={n} />;
  if (d[0] === "#") return <Handle $w={n} />;
  if (/^[vxw]\d/.test(d)) return <Tool $w={n} $pressed={d[0] === "w"}><Tri $c={d[0] === "x" ? "#bdbdbc" : undefined} /></Tool>;
  if (/^c[a-z]+$/.test(d)) return <Tool><Cube face={d.slice(1)} /></Tool>;
  const [name, w, flag] = d.split(":");
  const C = I[name];
  return <Tool $w={w && +w} $dim={flag === "d"} $pressed={flag === "p"}><C /></Tool>;
}
const Bar = ({ items, h }) => <ToolBar $h={h}><Handle $w={9} />{items.map((d, i) => <Item key={i} d={d} />)}</ToolBar>;

/* ---------- 3D scene ---------- */
const leftLines = [
  "132,628 355,607 555,618", "125,598 355,607", "162,568 355,607", "617,655 552,615 410,570 270,550 100,541", "552,615 520,590 400,560 95,508",
  "552,615 300,495 240,470 114,430", "552,615 345,460 175,352", "350,462 265,515 190,530", "435,440 345,410 190,392", "435,440 220,322",
  "435,440 350,462", "435,440 385,350 358,247", "350,462 170,438", "480,450 335,265", "515,495 300,275", "570,602 475,440 430,320 390,240",
  "575,600 515,495 475,380 452,228", "415,480 345,370 310,265", "385,350 262,295", "530,315 495,215", "530,315 440,225", "570,290 550,210", "610,418 530,315",
  "610,418 597,310 612,210", "597,318 558,212", "660,548 610,418", "635,400 633,290 650,210", "635,290 612,240 608,207", "635,400 590,208", "660,470 635,400",
  "660,380 633,290", "475,380 415,300 360,245", "435,535 290,490 102,468", "270,520 200,515 96,508", "320,490 153,397", "300,510 183,370",
  "420,480 205,350", "380,350 300,270", "262,320 315,255", "268,312 255,292", "617,655 575,600", "340,500 230,460 170,438", "270,550 200,525 100,470", "350,380 270,300",
  "552,615 435,535 160,397", "552,618 515,575 345,462", "515,495 435,440", "515,495 570,600"
];
const rightLines = [
  "133,635 130,570 0,325", "133,635 148,570 312,435", "148,570 312,435 445,303", "312,435 470,315", "312,435 483,318", "315,432 478,318", "148,570 210,440 362,268", "148,570 187,450 212,330 208,220",
  "133,635 140,550 65,418 58,310 73,210", "145,560 97,400 93,285 110,210", "150,435 148,300 163,213", "148,300 125,210", "65,418 0,250", "58,310 10,208", "30,290 20,208", "93,285 70,240 73,208",
  "120,375 135,290 148,212", "140,550 120,375 93,280", "135,550 150,435 212,330", "187,450 245,228", "210,440 240,340 262,235", "212,330 325,288 380,278", "225,410 265,310 275,238",
  "240,375 325,285 360,268", "212,330 295,245", "245,370 300,280 320,250", "187,450 340,265", "150,550 225,410", "265,310 300,245", "133,635 145,520 128,300 125,210", "0,535 35,598", "0,560 25,600", "0,592 78,655"
];
const CYAN = "M677 573Q656 556 656 530C657 497 676 473 697 457C724 438 745 428 765 412Q775 402 787 404Q795 395 806 397Q818 390 828 403L830 406Q841 400 852 407Q870 397 887 403L897 415Q918 406 930 417Q937 424 937 432Q955 428 963 438L967 452L983 455L968 471C930 452 885 440 853 439C810 436 750 450 727 467C700 478 670 498 668 525C666 545 672 560 677 573Z";
const Scene = () => (
  <svg width="811" height="579" viewBox="389 159 811 579" fill="none">
    <defs>
      <linearGradient id="top" gradientUnits="userSpaceOnUse" x1="660" y1="0" x2="1005" y2="0"><stop offset="0" stopColor="#38cf62" /><stop offset=".35" stopColor="#58e040" /><stop offset=".55" stopColor="#86ea26" /><stop offset="1" stopColor="#b6ea24" /></linearGradient>
      <linearGradient id="blueIn" gradientUnits="userSpaceOnUse" x1="715" y1="0" x2="800" y2="0"><stop offset="0" stopColor="#fff" stopOpacity="0" /><stop offset="1" stopColor="#fff" /></linearGradient>
      <mask id="fade"><rect x="650" y="370" width="360" height="215" fill="url(#blueIn)" /></mask>
      <pattern id="dots" width="2" height="2" patternUnits="userSpaceOnUse"><path d="M0 0h1v1h-1zM1 1h1v1h-1z" fill="#5498f0" opacity=".8" /></pattern>
      <pattern id="grain" width="4" height="2" patternUnits="userSpaceOnUse"><path d="M0 0h1v1h-1zM2 1h1v1h-1z" fill="#2399a5" opacity=".55" /></pattern>
      <pattern id="dots2" width="5" height="4" patternUnits="userSpaceOnUse"><path d="M0 0h1v1h-1zM3 2h1v1h-1z" fill="#f1ee45" opacity=".6" /></pattern>
      <clipPath id="canopy"><path d="M683 579C670 572 658 556 656 530C656 500 674 473 693 455C715 436 750 417 773 403C797 390 830 379 860 377C895 374 925 384 950 399C975 415 991 432 1005 451L982 476L968 471C930 452 885 440 853 439C810 436 750 450 727 467C708 478 706 500 706 513L707 553Z" /></clipPath>
    </defs>
    <g clipPath="url(#canopy)">
      <rect x="650" y="370" width="360" height="215" fill="url(#top)" />
      <g fill="#56e31e" opacity=".45">
        <path d="M800 402L838 378L848 377L812 400ZM828 404L866 374L880 374L836 406ZM852 408L904 378L916 382L866 402ZM880 403L925 385L936 391L892 409ZM898 414L940 395L951 403L910 413ZM926 415L955 402L967 412L936 424ZM938 432L968 414L978 424L952 432ZM962 440L980 428L990 438L967 450Z" />
      </g>
      <path d="M900 380L1002 450L970 470V440L930 410L890 395Z" fill="url(#dots2)" />
      <path d={CYAN} fill="#35cfc3" />
      <path d={CYAN} fill="url(#grain)" />
      <g mask="url(#fade)" opacity=".62"><path d="M715 478Q755 442 800 426Q850 412 900 424Q945 438 982 455L967 471Q900 442 853 439Q790 437 715 478Z" fill="url(#dots)" /></g>
      <g fill="#3cc860" opacity=".7">
        <path d="M668 508Q676 484 700 459L690 476ZM684 486Q694 468 718 446L704 470ZM700 474Q712 454 738 432L722 460ZM722 460Q734 440 757 419L744 445ZM746 446Q756 426 776 408L764 434ZM770 430Q778 414 796 400L784 422ZM792 420Q802 406 817 396L804 416Z" />
      </g>
      <g fill="#28b39f" opacity=".65"><path d="M816 424Q824 408 836 404L846 405Q828 412 816 424ZM840 424Q852 406 870 400Q882 402 886 404Q856 410 840 424ZM868 424Q878 408 897 403L890 408ZM890 426Q902 414 920 411L928 418Q906 418 890 426ZM914 432Q922 420 934 421Q938 426 936 432Q924 428 914 432Z" /></g>
      <path d="M713 477C692 478 670 500 667 525C667 548 674 567 683 579L707 553V525Q704 500 713 477Z" fill="#72f25f" />
      <path d="M712 478Q690 484 678 505M711 487Q688 494 674 516M708 498Q686 507 671 530M706 512Q690 518 670 543M706 528Q690 532 672 555" stroke="#45e638" strokeWidth="2.5" />
      <path d="M670 545L692 533M672 554L700 536M676 563L704 543M672 534L695 515M674 522L700 500" stroke="#e0c5c8" strokeWidth="2" strokeDasharray="1 3" opacity=".75" />
      <path d="M669 552L683 579L676 575Q668 566 669 552Z" fill="#a5dff0" />
      <path d="M677 571L704 546L707 553L683 579Z" fill="#bdec26" />
      <path d="M707 481Q725 465 750 456Q800 437 853 439" stroke="#58ed36" strokeWidth="2.2" />
      <path d="M970 466L982 476L968 471Z" fill="#f0ec30" stroke="#f0ec30" strokeWidth="4" />
    </g>
    <path d="M693 455C715 436 750 417 773 403C797 390 830 379 860 377C895 374 925 384 950 399C975 415 991 432 1005 451" stroke="#54ee3a" strokeWidth="1.3" opacity=".85" />
    <g stroke="#050507" strokeWidth="3.2">
      <g transform="translate(640 370) scale(.33333)">{leftLines.map((p, i) => <polyline key={i} points={p} />)}</g>
      <g transform="translate(820 370) scale(.33333)">{rightLines.map((p, i) => <polyline key={i} points={p} />)}</g>
    </g>
    <g transform="translate(1050 155) scale(.33333)">
      <g fill="#9696ae">
        <path d="M232 34L268 69H197ZM232 428L268 393H197ZM36 231L69 197V265ZM429 231L393 195V267Z" />
        <path d="M174 55L181 76Q138 88 112 114L121 122L84 138L88 93L97 102Q130 68 174 55Z" />
        <path d="M288 55L282 78Q325 90 350 119L341 126L378 137L375 94L365 103Q332 68 288 55Z" />
      </g>
      <path d="M112 205Q114 198 130 190L262 120Q272 116 284 122Q298 126 306 138L344 220Q348 232 344 262L300 318Q290 330 268 338L212 346Q195 346 180 334L160 310Q118 268 112 232Z" fill="#9499b3" stroke="#c4c7d6" strokeWidth="3" />
      <path d="M113 208Q116 202 126 200L176 182Q192 186 200 198L224 240Q230 252 230 262L226 318Q222 330 208 332L190 334Q166 322 158 306Q118 262 112 232Z" fill="#cccfdd" />
      <path d="M234 148L270 124Q290 124 302 140L340 216Q344 230 332 238L280 258Q262 256 254 240L230 176Q226 158 234 148Z" fill="#cccfdd" />
      <path d="M240 284L330 262L300 312L262 334H216Z" fill="#9298b2" />
      <circle cx="201" cy="171" r="23" fill="#d7d9e4" /><circle cx="252" cy="267" r="18" fill="#9297b0" stroke="#777c98" strokeWidth="2" />
      <ellipse cx="280" cy="318" rx="20" ry="13" transform="rotate(-30 280 318)" fill="#d0d3df" />
      <path d="M208 192L242 255M118 200L185 165M218 150L270 122" stroke="#44447a" strokeWidth="3.5" />
      <path d="M268 265L345 243" stroke="#a9a49e" strokeWidth="3" />
      <text transform="matrix(.95 -.22 .02 1.65 144 298)" fontSize="28" textLength="78" lengthAdjust="spacingAndGlyphs" fill="#090909" stroke="#090909" strokeWidth="1.2">FRONT</text>
      <text transform="matrix(.76 -.5 .02 1.65 264 252)" fontSize="28" textLength="76" lengthAdjust="spacingAndGlyphs" fill="#090909" stroke="#090909" strokeWidth="1.2">RIGHT</text>
      <path d="M102 256L166 360" stroke="#0a0ac8" strokeWidth="7" /><path d="M168 362L258 361" stroke="#c80a12" strokeWidth="7" /><path d="M168 360L236 297" stroke="#42ec3a" strokeWidth="6" />
      <path d="M82 200H96L82 218H97" stroke="#1414d0" strokeWidth="5" /><path d="M308 342L327 358M327 342L308 358" stroke="#a01230" strokeWidth="5" /><path d="M262 260L275 275M275 260L262 275" stroke="#22843c" strokeWidth="4" />
      <path d="M303 368L332 355L360 367V402L331 413L303 402Z" fill="#9a9ab0" /><path d="M331 377L360 367V402L331 413Z" fill="#85859f" /><path d="M303 368L331 377V413M331 377L360 367" stroke="#b6b6c8" strokeWidth="2" />
      <path d="M373 377H408L391 393Z" fill="#35354e" />
    </g>
    <g strokeWidth="2"><path d="M1162 692L1172 709" stroke="#2c2c9c" /><path d="M1172 709L1182 704" stroke="#2b7a36" /><path d="M1176 705L1180 701L1182 705Z" fill="#35a53c" /><path d="M1172 709L1180 707" stroke="#8c1828" /><path d="M1179 703L1189 704L1181 709Z" fill="#8c1828" /></g>
    <path d="M1164 685.5H1168.5L1164 691.5H1169M1183 697L1185.5 700.5L1188.5 697M1185.5 700.5V704M1191 697.5L1196 703.5M1196 697.5L1191 703.5" stroke="#151520" />
  </svg>
);

const menus = ["_Datei", "_Bearbeiten", "_Ansicht", "_Werkzeuge", "_Makro", "GliderTools", "Production", "Feature", "_Fenster", "_Hilfe"];
const props = [["Display M…", "glider"], ["On Top W…", "Disabled"], ["Selection …", "Shape"], ["Show In Tr…", "true"], ["Visibility", "true"]];
const acc = [["hole_num", "10"], ["line_num", "1"], ["num_ribs", "2"], ["profile_num", "30"]];
const Rows = ({ data }) => data.map(([k, v], i) => <PropRow key={k} $alt={i % 2 === 0}><Cell $w={100}>{k}</Cell><Cell $w={231}>{v}</Cell></PropRow>);

export default function App() {
  return (
    <Screen>
      <Global />
      <Window>
        <MenuBar>{menus.map(m => <span key={m}>{m[0] === "_" ? <><Mnemonic>{m[1]}</Mnemonic>{m.slice(2)}</> : m}</span>)}</MenuBar>
        <Bar items={row1} /><Bar items={row2} /><Bar items={row3} h={44} />
        <Body>
          <Dock>
            <DockTitle><Grow>Combo-Ansicht</Grow><DockButtons><FloatBtn /><FloatBtn close /></DockButtons></DockTitle>
            <TabRow><Tab $w={80} $on>Modell</Tab><Tab $w={101}>Aufgaben</Tab></TabRow>
            <Pane>
              <Tree>
                <TreeHead><HeadCell $w={277}>Bezeichnungen &amp; Eigenschaften</HeadCell><HeadCell $w={101} $last>Beschreibung</HeadCell></TreeHead>
                <TreeRow $h={18} $indent={3}>Applikation</TreeRow>
                <TreeRow $indent={7} $gap={6.5} $bold><Tri /><Gap $w={0} /><DocIcon /><span>Unbenannt</span></TreeRow>
                <TreeRow $indent={53} $gap={6} $sel><GliderIcon s={20} /><span>Glider</span></TreeRow>
                <HScroll>
                  <ScrollPart $w={17}><Tri $dir="left" /></ScrollPart><ScrollPart $w={322} /><ScrollPart $w={22} $groove /><ScrollPart $w={16} $end><Tri $dir="right" /></ScrollPart>
                </HScroll>
              </Tree>
              <DotLine />
              <PropFrame><PropView>
                <PropTable>
                  <PropHead><HeadCell $w={125}>Eigenschaft</HeadCell><HeadCell $w={231} $last>Wert</HeadCell></PropHead>
                  <Group>Basis</Group><Rows data={props} /><Group>accuracy</Group><Rows data={acc} />
                </PropTable>
                <VScroll>
                  <ScrollPart $w={16} $hh={17} $v><Tri $dir="up" /></ScrollPart><ScrollPart $w={16} $hh={125} $v /><Grow /><ScrollPart $w={16} $hh={17} $v $end><Tri /></ScrollPart>
                </VScroll>
              </PropView></PropFrame>
              <BottomTabs><BottomTab $w={86} $on>Ansicht</BottomTab><BottomTab $w={75}>Daten</BottomTab></BottomTabs>
            </Pane>
          </Dock>
          <Splitter />
          <Main>
            <Viewport><Scene /></Viewport>
            <DocTabs>
              <DocTab $w={156}><FIcon /><DocName>Startseite</DocName><CloseX /></DocTab>
              <DocTab $w={198} $on><FIcon /><DocName>Unbenannt : 1*</DocName><CloseX /></DocTab>
              <DocRest />
            </DocTabs>
          </Main>
        </Body>
        <Status>
          <Grow>Preselected: Unbenannt.Glider. (-2.99561, 2.89707, 0.36004)</Grow>
          <Touch><PadIcon /><Gap $w={2} /><span>Touchpad</span><Tri $c="#666" $small /></Touch>
          <span>18,40 mm x 13,14 mm</span><Grip />
        </Status>
        <Taskbar />
      </Window>
      <Desktop />
    </Screen>
  );
}
